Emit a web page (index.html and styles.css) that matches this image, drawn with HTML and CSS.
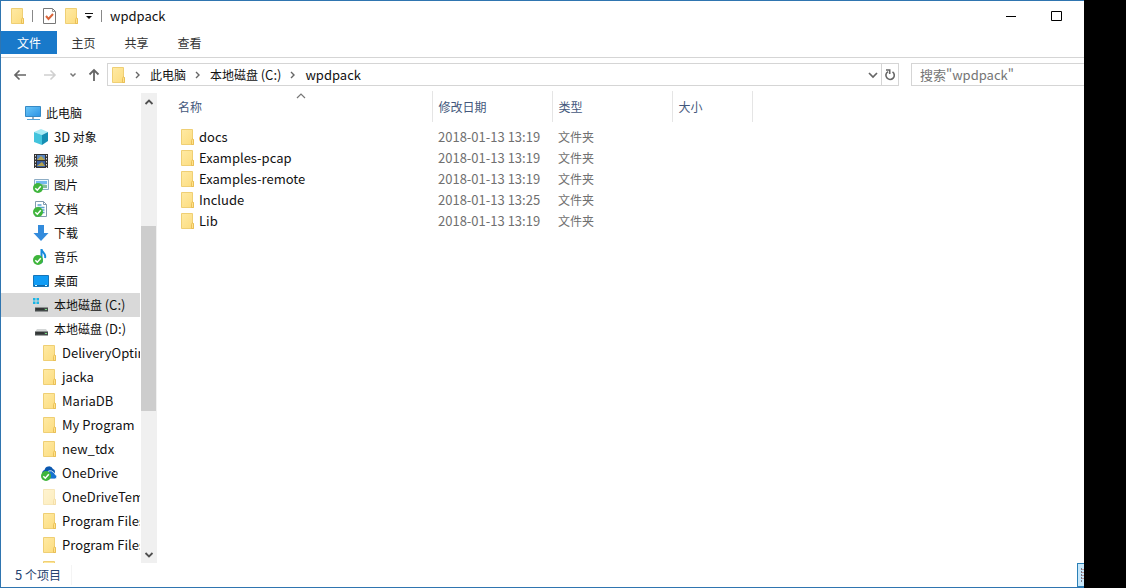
FILE: index.html
```html
<!DOCTYPE html>
<html lang="zh-CN">
<head>
<meta charset="utf-8">
<title>wpdpack</title>
<link rel="stylesheet" href="styles.css">
</head>
<body>
<svg class="defs" aria-hidden="true">
  <defs>
    <linearGradient id="fold" x1="0" y1="0" x2="1" y2="1"><stop offset="0" stop-color="#ffeaa4"/><stop offset="1" stop-color="#fcdc7e"/></linearGradient>
    <linearGradient id="screen" x1="0" y1="0" x2="1" y2="1"><stop offset="0" stop-color="#6cc8f8"/><stop offset="1" stop-color="#2b92e4"/></linearGradient>
    <symbol id="folder" viewBox="0 0 16 16"><path d="M2.500.5h11v9l1 1v5h-12z" fill="url(#fold)" stroke="#efcf74"/><path d="M12.500 15.500v-4l1-2 1 1.500v4.500z" fill="#ffe38c" stroke="#e6b94c" stroke-width=".8"/></symbol>
    <symbol id="check" viewBox="0 0 10 10"><circle cx="5" cy="5" r="5" fill="#3fb53c"/><path d="M2.300 5.200l2 2 3.500-4" fill="none" stroke="#fff" stroke-width="1.500"/></symbol>
    <symbol id="chev" viewBox="0 0 8 8"><path d="M2 1l3 3-3 3" fill="none" stroke="#666" stroke-width="1.400"/></symbol>
    <symbol id="drive" viewBox="0 0 16 16"><path d="M4 8h9l2 3H2z" fill="#d3d6d6"/><path d="M2 10.500h13v4H2z" fill="#454b4b"/><path d="M3 12h8" stroke="#222"/><path d="M12 12.500h2" stroke="#73dc80"/></symbol>
  </defs>
</svg>
<main class="window">
  <header class="titlebar">
    <svg class="icon"><use href="#folder"/></svg>
    <span class="divider"></span>
    <button class="quick" aria-label="属性"><svg class="icon" viewBox="0 0 16 16"><path d="M2.500.5h9l3 3v12h-12z" fill="#fff" stroke="#777"/><path d="M11.500.5v3h3" fill="none" stroke="#999"/><path d="M5 8l2.500 3L12 6" fill="none" stroke="#d9653b" stroke-width="2"/></svg></button>
    <button class="quick" aria-label="新建文件夹"><svg class="icon"><use href="#folder"/></svg></button>
    <button class="customize" aria-label="自定义快速访问工具栏"><svg width="8" height="8" viewBox="0 0 8 8"><path d="M0 1.500h8" stroke="#111"/><path d="M1 4h6L4 7z" fill="#111"/></svg></button>
    <span class="divider"></span>
    <h1 class="title">wpdpack</h1>
    <div class="controls">
      <button aria-label="最小化"><svg width="12" height="12"><path d="M0 6.500h10" stroke="#000"/></svg></button>
      <button aria-label="最大化"><svg width="12" height="12"><path d="M.5 1.500h10v9H.5z" fill="none" stroke="#000"/></svg></button>
    </div>
  </header>
  <nav class="ribbon" aria-label="功能区">
    <button class="tab tab-file">文件</button><button class="tab">主页</button><button class="tab">共享</button><button class="tab">查看</button>
  </nav>
  <div class="toolbar">
    <div class="history">
      <button aria-label="后退"><svg width="14" height="12" viewBox="0 0 14 12"><path d="M13 6H2M6.500 1.500L2 6l4.500 4.500" fill="none" stroke="#666" stroke-width="1.700"/></svg></button>
      <button aria-label="前进"><svg width="14" height="12" viewBox="0 0 14 12"><path d="M1 6h11M7.500 1.500L12 6l-4.500 4.500" fill="none" stroke="#d0d0d0" stroke-width="1.600"/></svg></button>
      <button class="recent" aria-label="最近位置"><svg width="8" height="6" viewBox="0 0 8 6"><path d="M1.500 1.500L4 4l2.500-2.500" fill="none" stroke="#777" stroke-width="1.500"/></svg></button>
      <button class="up" aria-label="向上"><svg width="12" height="14" viewBox="0 0 12 14"><path d="M6 13V2M1.500 6.500L6 2l4.500 4.500" fill="none" stroke="#666" stroke-width="1.800"/></svg></button>
    </div>
    <div class="address">
      <svg class="icon"><use href="#folder"/></svg>
      <svg class="chev"><use href="#chev"/></svg><a href="#pc">此电脑</a>
      <svg class="chev"><use href="#chev"/></svg><a href="#c">本地磁盘 <span class="latin">(C:)</span></a>
      <svg class="chev"><use href="#chev"/></svg><a href="#wpdpack" class="latin">wpdpack</a>
      <button class="drop" aria-label="以前的位置"><svg width="10" height="8" viewBox="0 0 10 8"><path d="M1 2l4 4 4-4" fill="none" stroke="#666" stroke-width="1.700"/></svg></button>
      <button class="refresh" aria-label="刷新"><svg width="12" height="13" viewBox="0 0 12 13"><path d="M4 3.600a4.200 4.200 0 1 0 4.500.2M2 2h3.700v4" fill="none" stroke="#666" stroke-width="1.600"/></svg></button>
    </div>
    <input class="search" type="text" placeholder='搜索"wpdpack"' aria-label="搜索">
  </div>
  <div class="body">
    <nav class="tree" aria-label="导航窗格">
      <a class="node root" href="#pc"><svg class="icon" viewBox="0 0 16 16"><path d="M.5 1.500h15v10H.5z" fill="url(#screen)" stroke="#3589c5"/><path d="M7 12h2v2H7z" fill="#9ab"/><path d="M2 14.500h13" stroke="#55a3d8"/></svg><span>此电脑</span></a>
      <a class="node" href="#3d"><svg class="icon" viewBox="0 0 16 16"><path d="M8 0l7 3-6 3-8-3z" fill="#a7ebf5"/><path d="M1 3l8 3v10l-8-3z" fill="#43c4dd"/><path d="M9 6l6-3v9l-6 4z" fill="#158eb3"/></svg><span><span class="latin">3D</span> 对象</span></a>
      <a class="node" href="#video"><svg class="icon" viewBox="0 0 16 16"><path d="M1 1h14v14H1z" fill="#333"/><path d="M4 2h8v5H4z" fill="#5b86bd"/><path d="M4 8h8v6H4z" fill="#395f9e"/><path d="M5 6l3-3 4 4H4zM5 12l4-3 3 4H4z" fill="#b4a34f"/><path d="M2.500 2v13M13.500 2v13" stroke="#ddd" stroke-dasharray="1.500 1.500"/></svg><span>视频</span></a>
      <a class="node" href="#pictures"><svg class="icon" viewBox="0 0 16 16"><path d="M1.500 2.500h14v10h-14z" fill="#eef8ff" stroke="#8dadc5"/><path d="M3 4h11v3H3z" fill="#74b9ed"/><path d="M3 9l5-2 6 1v3H3z" fill="#82bd99"/><use href="#check" x="0" y="6" width="10" height="10"/></svg><span>图片</span></a>
      <a class="node" href="#docs"><svg class="icon" viewBox="0 0 16 16"><path d="M2.500.5h8l3 3v12h-11z" fill="#fff" stroke="#829bae"/><path d="M4.500 4h4M4.500 6.500h7M6 9h5.500M9 11.500h2.500" stroke="#5aa0cf" stroke-width="1.500"/><path d="M10.500.5v3h3" fill="none" stroke="#829bae"/><use href="#check" x="0" y="6" width="10" height="10"/></svg><span>文档</span></a>
      <a class="node" href="#downloads"><svg class="icon" viewBox="0 0 16 16"><path d="M5 0h6v8h4.500L8 16 .5 8H5z" fill="#338bdc"/></svg><span>下载</span></a>
      <a class="node" href="#music"><svg class="icon" viewBox="0 0 16 16"><path d="M8.500 12V0c0 3.500 5 4 3.500 9" fill="none" stroke="#178bdc" stroke-width="2"/><ellipse cx="7" cy="12" rx="3" ry="2.500" fill="#178bdc"/><use href="#check" x="0" y="6" width="10" height="10"/></svg><span>音乐</span></a>
      <a class="node" href="#desktop"><svg class="icon" viewBox="0 0 16 16"><path d="M.5 2.500h15v11H.5z" fill="#109cf5" stroke="#1675b8"/><path d="M1 12.500h14" stroke="#1267a6"/><path d="M2 12.500h2M12 12.500h2" stroke="#dff"/></svg><span>桌面</span></a>
      <a class="node selected" href="#c" aria-current="true"><svg class="icon" viewBox="0 0 16 16"><use href="#drive" width="16" height="16"/><path d="M0 1h2.500v2.500H0zM3.500 1H6v2.500H3.500zM0 4.500h2.500V7H0zM3.500 4.500H6V7H3.500z" fill="#19b5e5"/></svg><span>本地磁盘 <span class="latin">(C:)</span></span></a>
      <a class="node" href="#d"><svg class="icon"><use href="#drive"/></svg><span>本地磁盘 <span class="latin">(D:)</span></span></a>
      <a class="node child latin" href="#f1"><svg class="icon"><use href="#folder"/></svg><span>DeliveryOptimization</span></a>
      <a class="node child latin" href="#f2"><svg class="icon"><use href="#folder"/></svg><span>jacka</span></a>
      <a class="node child latin" href="#f3"><svg class="icon"><use href="#folder"/></svg><span>MariaDB</span></a>
      <a class="node child latin" href="#f4"><svg class="icon"><use href="#folder"/></svg><span>My Program</span></a>
      <a class="node child latin" href="#f5"><svg class="icon"><use href="#folder"/></svg><span>new_tdx</span></a>
      <a class="node child latin" href="#f6"><svg class="icon" viewBox="0 0 16 16"><path d="M2 10a3 3 0 0 1 1.500-5A4.500 4.500 0 0 1 12 4a3 3 0 0 1 2 3v5H3z" fill="#0b58b0"/><path d="M6 14a3 3 0 0 1 0-6 3.500 3.500 0 0 1 6-1 3 3 0 0 1 2 2.500A2.300 2.300 0 0 1 14 14z" fill="#1672d1" stroke="#fff" stroke-width=".8"/><use href="#check" x="0" y="6" width="10" height="10"/></svg><span>OneDrive</span></a>
      <a class="node child latin" href="#f7"><svg class="icon faded"><use href="#folder"/></svg><span>OneDriveTemp</span></a>
      <a class="node child latin" href="#f8"><svg class="icon"><use href="#folder"/></svg><span>Program Files</span></a>
      <a class="node child latin" href="#f9"><svg class="icon"><use href="#folder"/></svg><span>Program Files (x86)</span></a>
      <a class="node child latin" href="#f10"><svg class="icon"><use href="#folder"/></svg><span>main</span></a>
    </nav>
    <div class="scrollbar">
      <button aria-label="向上滚动"><svg width="10" height="8" viewBox="0 0 10 8"><path d="M1.500 6L5 2.500 8.500 6" fill="none" stroke="#505050" stroke-width="1.800"/></svg></button>
      <div class="track"><div class="thumb"></div></div>
      <button aria-label="向下滚动"><svg width="10" height="8" viewBox="0 0 10 8"><path d="M1.500 2L5 5.500 8.500 2" fill="none" stroke="#505050" stroke-width="1.800"/></svg></button>
    </div>
    <section class="content">
      <table class="files">
        <colgroup><col class="col-name"><col class="col-date"><col class="col-type"><col class="col-size"></colgroup>
        <thead><tr><th>名称<svg class="sort" width="10" height="6" viewBox="0 0 10 6"><path d="M1 5l4-4 4 4" fill="none" stroke="#777" stroke-width="1.200"/></svg></th><th>修改日期</th><th>类型</th><th>大小</th></tr></thead>
        <tbody>
          <tr><td><a class="file" href="#docs"><svg class="icon"><use href="#folder"/></svg>docs</a></td><td class="date">2018-01-13 13:19</td><td>文件夹</td><td></td></tr>
          <tr><td><a class="file" href="#pcap"><svg class="icon"><use href="#folder"/></svg>Examples-pcap</a></td><td class="date">2018-01-13 13:19</td><td>文件夹</td><td></td></tr>
          <tr><td><a class="file" href="#remote"><svg class="icon"><use href="#folder"/></svg>Examples-remote</a></td><td class="date">2018-01-13 13:19</td><td>文件夹</td><td></td></tr>
          <tr><td><a class="file" href="#include"><svg class="icon"><use href="#folder"/></svg>Include</a></td><td class="date">2018-01-13 13:25</td><td>文件夹</td><td></td></tr>
          <tr><td><a class="file" href="#lib"><svg class="icon"><use href="#folder"/></svg>Lib</a></td><td class="date">2018-01-13 13:19</td><td>文件夹</td><td></td></tr>
        </tbody>
      </table>
    </section>
  </div>
  <footer class="status">
    <span class="count"><span class="latin">5</span> 个项目</span>
    <button class="view" aria-label="详细信息"><svg width="6" height="16" viewBox="0 0 6 16"><path d="M3.500 1v14" stroke="#778" stroke-dasharray="2 1"/><path d="M4 2.500h3M4 5.500h3M4 8.500h3M4 11.500h3" stroke="#b99"/></svg></button>
  </footer>
</main>
</body>
</html>
```

FILE: styles.css
```css
* { box-sizing: border-box; }

body {
  margin: 0;
  padding-right: 42px;
  background: #000;
  color: #111;
  font: 12px/20px "Noto Sans CJK SC", "Noto Sans", sans-serif;
}

button {
  display: flex;
  align-items: center;
  justify-content: center;
  padding: 0;
  border: 0;
  background: none;
  color: inherit;
  font: inherit;
}

a { color: inherit; text-decoration: none; }

.defs { position: absolute; width: 0; height: 0; }
.latin { font-size: 13px; }
.icon { width: 16px; height: 16px; flex: none; }
.faded { opacity: 0.5; }

.window {
  display: flex;
  flex-direction: column;
  height: 100vh;
  border: 1px solid #2f75b0;
  border-right: 0;
  background: #fff;
}

.titlebar {
  display: flex;
  align-items: center;
  height: 29px;
  padding: 0 5px 0 8px;
}
.divider { width: 1px; height: 12px; margin: 0 8px 0 7px; background: #888; }
.quick { margin-right: 6px; }
.customize { margin-right: 1px; }
.title { margin: 0; font-size: 13px; font-weight: 400; }
.controls { display: flex; margin-left: auto; }
.controls button { width: 45px; height: 29px; }

.ribbon {
  display: flex;
  height: 28px;
  padding-top: 1px;
  border-bottom: 1px solid #d5d5d5;
}
.tab { width: 53px; height: 23px; color: #333; }
.tab-file { width: 56px; background: #1979ca; color: #fff; }

.toolbar {
  display: flex;
  align-items: center;
  height: 33px;
  flex: none;
}
.history { display: flex; align-items: center; width: 106px; padding-left: 12px; gap: 16px; }
.recent { margin-left: -4px; }
.up { margin-left: -5px; }
.address {
  display: flex;
  align-items: center;
  flex: 1;
  height: 23px;
  margin-right: 12px;
  padding-left: 2px;
  border: 1px solid #d5d5d5;
}
.chev { width: 8px; height: 8px; margin: 0 8px; }
.drop { width: 16px; height: 21px; margin-left: auto; }
.refresh { width: 17px; height: 21px; border-left: 1px solid #d5d5d5; }
.search {
  width: 173px;
  height: 23px;
  padding: 0 8px;
  border: 1px solid #d5d5d5;
  border-right: 0;
  border-radius: 0;
  font: inherit;
  font-size: 13px;
}
.search::placeholder { color: #757575; }

.body { display: flex; flex: 1; min-height: 0; }
.tree { width: 139px; margin-top: 2px; padding-top: 8px; overflow: hidden; }
.node {
  display: flex;
  align-items: center;
  gap: 5px;
  height: 24px;
  padding-left: 32px;
  white-space: nowrap;
}
.root { padding-left: 24px; }
.child { padding-left: 40px; }
.selected { background: #d9d9d9; }

.scrollbar {
  display: flex;
  flex-direction: column;
  width: 16px;
  margin: 2px 0 0 1px;
  background: #f0f0f0;
}
.scrollbar button { height: 17px; }
.track { display: flex; flex-direction: column; flex: 1; padding-top: 116px; }
.thumb { width: 15px; height: 185px; background: #cdcdcd; }

.content { flex: 1; min-width: 0; padding-left: 14px; }
.files { table-layout: fixed; width: 581px; border-collapse: collapse; }
.col-name { width: 261px; }
.col-date, .col-type { width: 120px; }
.col-size { width: 80px; }
.files th {
  position: relative;
  height: 31px;
  padding: 0 6px;
  border-right: 1px solid #e5e5e5;
  color: #44587c;
  font-weight: 400;
  text-align: left;
}
.files th:first-child { padding-left: 7px; }
.sort { position: absolute; top: 2px; left: 50%; margin-left: -5px; }
.files tbody::before { content: ""; display: block; height: 4px; }
.files td { height: 21px; padding: 0 6px; color: #707070; }
.files td:first-child { padding-left: 8px; }
.files .date { font-size: 13px; white-space: nowrap; }
.file { display: flex; align-items: center; gap: 4px; color: #111; font-size: 13px; }

.status {
  display: flex;
  align-items: center;
  height: 24px;
  flex: none;
  padding-left: 14px;
  color: #26436f;
}
.count { padding-right: 10px; border-right: 1px solid #f4f4f4; }
.view {
  width: 7px;
  height: 24px;
  margin-left: auto;
  border: 1px solid #2b80b6;
  border-right: 0;
  background: #c9e8fb;
}
```
